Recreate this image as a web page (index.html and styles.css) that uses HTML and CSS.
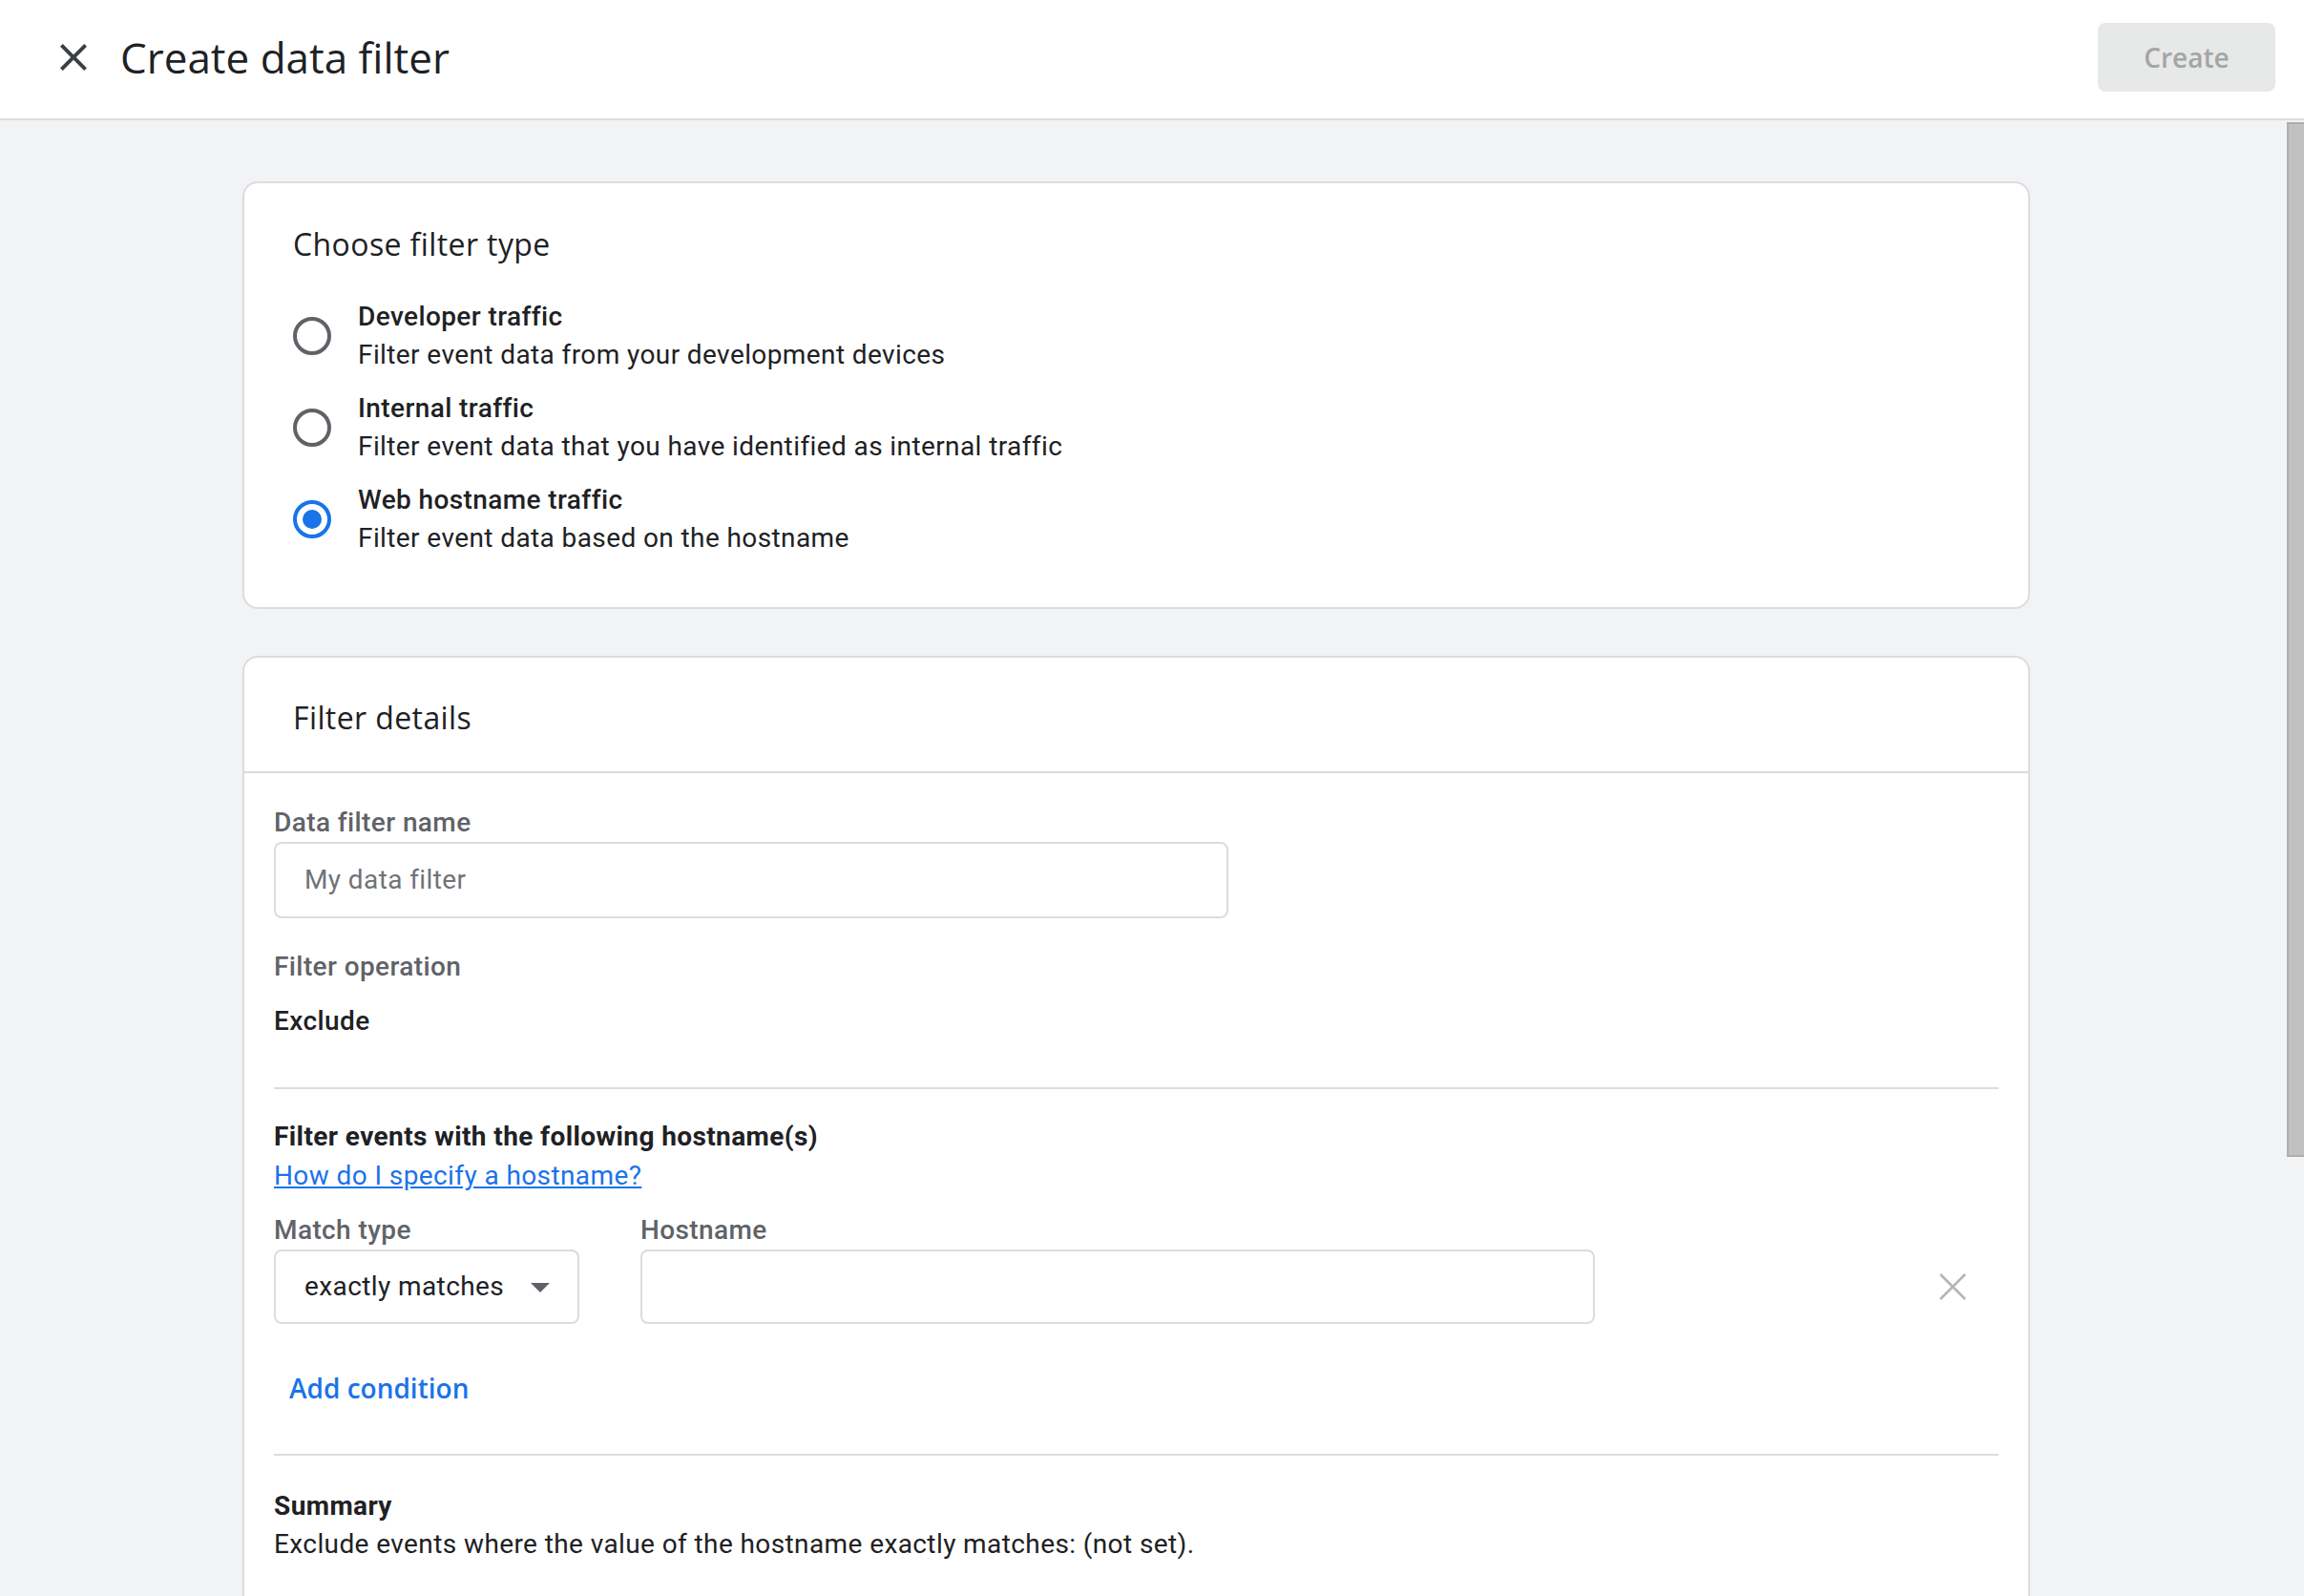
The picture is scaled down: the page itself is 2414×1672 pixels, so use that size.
FILE: index.html
```html
<!DOCTYPE html>
<html lang="en">
<head>
    <meta charset="UTF-8">
    <meta name="viewport" content="width=device-width, initial-scale=1.0">
    <title>Create data filter</title>
    <link rel="stylesheet" href="styles.css">
</head>
<body>
    <div class="topbar">
        <button class="icon-btn close-btn" aria-label="Close">
            <svg viewBox="0 0 24 24" width="48" height="48"><path d="M19 6.41L17.59 5 12 10.59 6.41 5 5 6.41 10.59 12 5 17.59 6.41 19 12 13.41 17.59 19 19 17.59 13.41 12z"/></svg>
        </button>
        <div class="page-title">Create data filter</div>
        <button class="create-btn" disabled>Create</button>
    </div>

    <div class="page">
        <div class="content">
            <div class="card type-card">
                <div class="card-title">Choose filter type</div>
                <div class="radio-list">
                    <div class="radio-row">
                        <span class="radio"></span>
                        <div class="radio-text">
                            <div class="radio-label">Developer traffic</div>
                            <div class="radio-desc">Filter event data from your development devices</div>
                        </div>
                    </div>
                    <div class="radio-row">
                        <span class="radio"></span>
                        <div class="radio-text">
                            <div class="radio-label">Internal traffic</div>
                            <div class="radio-desc">Filter event data that you have identified as internal traffic</div>
                        </div>
                    </div>
                    <div class="radio-row">
                        <span class="radio checked"></span>
                        <div class="radio-text">
                            <div class="radio-label">Web hostname traffic</div>
                            <div class="radio-desc">Filter event data based on the hostname</div>
                        </div>
                    </div>
                </div>
            </div>

            <div class="card details-card">
                <div class="card-header">
                    <div class="card-title">Filter details</div>
                </div>
                <div class="card-body">
                    <div class="field-label">Data filter name</div>
                    <div class="text-input name-input"><span class="placeholder">My data filter</span></div>

                    <div class="field-label op-label">Filter operation</div>
                    <div class="op-value">Exclude</div>

                    <hr class="divider first-divider">

                    <div class="section-title">Filter events with the following hostname(s)</div>
                    <a class="help-link" href="#">How do I specify a hostname?</a>

                    <div class="condition-row">
                        <div class="field">
                            <div class="field-label">Match type</div>
                            <div class="select">
                                <span>exactly matches</span>
                                <span class="caret"></span>
                            </div>
                        </div>
                        <div class="field">
                            <div class="field-label">Hostname</div>
                            <div class="text-input host-input"></div>
                        </div>
                        <button class="icon-btn remove-btn" aria-label="Remove condition">
                            <svg viewBox="0 0 24 24" width="48" height="48"><path d="M5.5 5.5L18.5 18.5M18.5 5.5L5.5 18.5"/></svg>
                        </button>
                    </div>

                    <button class="text-btn">Add condition</button>

                    <hr class="divider last-divider">

                    <div class="section-title">Summary</div>
                    <div class="summary-text">Exclude events where the value of the hostname exactly matches: (not set).</div>
                </div>
            </div>
        </div>
        <div class="scrollbar"><div class="thumb"></div></div>
    </div>
</body>
</html>
```

FILE: styles.css
```css
html, body {
    margin: 0;
    height: 100%;
}
body {
    font-family: Roboto, "Liberation Sans", sans-serif;
    color: #202124;
    background-color: #f1f3f4;
    display: flex;
    flex-direction: column;
    overflow: hidden;
}
button {
    font: inherit;
    border: none;
    background: none;
    padding: 0;
    cursor: pointer;
}
.topbar {
    height: 120px;
    flex: none;
    display: flex;
    align-items: center;
    background-color: #fff;
    border-bottom: 2px solid #dadce0;
    padding: 0 30px 4px 53px;
}
.icon-btn {
    width: 48px;
    height: 48px;
    display: flex;
    align-items: center;
    justify-content: center;
}
.close-btn svg {
    fill: #3c4043;
}
.page-title {
    margin-left: 25px;
    font-family: "Open Sans", sans-serif;
    font-weight: 500;
    font-size: 44px;
    color: #202124;
    flex: 1;
}
.create-btn {
    width: 186px;
    height: 72px;
    border-radius: 8px;
    background-color: #e7e8e8;
    color: #a4a5a6;
    font-family: "Open Sans", sans-serif;
    font-weight: 600;
    font-size: 28px;
}

.page {
    flex: 1;
    display: flex;
    min-height: 0;
}
.content {
    flex: 1;
    padding: 64px 0 0 254px;
    overflow: hidden;
}
.scrollbar {
    width: 18px;
    flex: none;
    padding-top: 2px;
}
.thumb {
    height: 1080px;
    background-color: #c1c1c1;
    border: 2px solid #adadad;
    border-right: none;
}

.card {
    width: 1869px;
    background-color: #fff;
    border: 2px solid #dadce0;
    border-radius: 16px;
}
.card-title {
    font-family: "Open Sans", sans-serif;
    font-weight: 500;
    font-size: 32px;
    line-height: 48px;
    letter-spacing: 0.4px;
    color: #202124;
}
.type-card {
    padding: 40px 48px 52px 51px;
    box-sizing: content-box;
    width: 1770px;
}
.radio-list {
    margin-top: 32px;
    display: flex;
    flex-direction: column;
    gap: 16px;
}
.radio-row {
    display: flex;
    align-items: center;
    font-size: 28px;
    line-height: 40px;
    letter-spacing: 0.4px;
}
.radio {
    width: 40px;
    height: 40px;
    box-sizing: border-box;
    border: 4px solid #5f6368;
    border-radius: 50%;
    margin-right: 28px;
    display: flex;
    align-items: center;
    justify-content: center;
}
.radio.checked {
    border-color: #1a73e8;
}
.radio.checked::after {
    content: "";
    width: 20px;
    height: 20px;
    border-radius: 50%;
    background-color: #1a73e8;
}
.radio-label {
    font-weight: 500;
}

.details-card {
    margin-top: 49px;
    height: 1200px;
}
.card-header {
    padding: 39px 48px 32px 51px;
    border-bottom: 2px solid #dadce0;
}
.card-body {
    padding: 32px 31px;
    font-size: 28px;
    line-height: 40px;
    letter-spacing: 0.4px;
}
.field-label {
    color: #5f6368;
    font-weight: 500;
}
.text-input {
    box-sizing: border-box;
    height: 80px;
    border: 2px solid #dadce0;
    border-radius: 8px;
    padding: 0 30px;
    display: flex;
    align-items: center;
}
.name-input {
    width: 1000px;
}
.placeholder {
    color: #6f7378;
}
.op-label {
    margin-top: 31px;
}
.op-value {
    margin-top: 17px;
    font-weight: 500;
}
.divider {
    border: none;
    border-top: 2px solid #dadce0;
    margin: 49px 0 30px;
}
.section-title {
    font-weight: 700;
}
.help-link {
    display: block;
    width: max-content;
    color: #1a73e8;
    line-height: 42px;
}
.condition-row {
    margin-top: 16px;
    display: flex;
    align-items: flex-end;
    gap: 64px;
}
.select {
    box-sizing: border-box;
    width: 320px;
    height: 78px;
    border: 2px solid #dadce0;
    border-radius: 8px;
    padding: 0 29px 0 30px;
    display: flex;
    align-items: center;
    justify-content: space-between;
}
.caret {
    width: 0;
    height: 0;
    border-left: 10px solid transparent;
    border-right: 10px solid transparent;
    border-top: 10px solid #5f6368;
    margin-top: 2px;
}
.host-input {
    width: 1000px;
    height: 78px;
}
.remove-btn {
    margin-left: auto;
    margin-right: 24px;
    margin-bottom: 15px;
}
.remove-btn svg {
    stroke: #b5b5b5;
    stroke-width: 1.3;
    fill: none;
}
.text-btn {
    display: block;
    margin-top: 31px;
    height: 72px;
    padding: 0 16px;
    color: #1a73e8;
    font-family: "Open Sans", sans-serif;
    font-weight: 600;
    font-size: 28px;
}
.last-divider {
    margin: 33px 0 33px;
}
```
